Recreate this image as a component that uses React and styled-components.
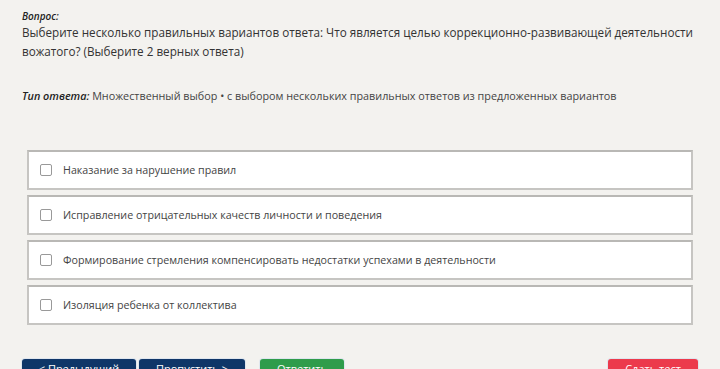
import React from "react";
import styled, { createGlobalStyle } from "styled-components";

const Global = createGlobalStyle`
  html, body { margin: 0; padding: 0; background: #f3f2ef; }
  body { font-family: "Open Sans", "Noto Sans", sans-serif; color: #333; }
`;

const Page = styled.div`
  padding: 9px 22px 0 22px;
  width: 720px;
  box-sizing: border-box;
`;

const Label = styled.div`
  font-size: 10px;
  font-weight: 600;
  font-style: italic;
  line-height: 14px;
  color: #222;
`;

const Question = styled.div`
  font-size: 11.7px;
  line-height: 19px;
  color: #333;
`;

const TypeLine = styled.div`
  margin-top: 27px;
  font-size: 10.8px;
  line-height: 16px;
  color: #444;
  b { font-weight: 600; font-style: italic; color: #222; }
`;

const Options = styled.div`
  margin: 46px 5px 0 5px;
  display: flex;
  flex-direction: column;
  gap: 5px;
`;

const Option = styled.label`
  display: flex;
  align-items: center;
  height: 40px;
  box-sizing: border-box;
  background: #fff;
  border: 2px solid #c6c5c2;
  border-top-color: #b9b8b5;
  padding-left: 11px;
  font-size: 10.7px;
  color: #444;
`;

const Box = styled.span`
  width: 10px;
  height: 10px;
  border: 1px solid #999;
  border-radius: 2px;
  margin-right: 11px;
  background: #fff;
  flex: none;
`;

const Buttons = styled.div`
  margin-top: 34px;
  display: flex;
  gap: 3px;
`;

const Button = styled.button`
  flex: none;
  white-space: nowrap;
  height: 28px;
  width: ${p => p.$w}px;
  padding: 2px 0 0;
  display: flex;
  align-items: flex-start;
  justify-content: center;
  line-height: 16px;
  border: none;
  border-radius: 3px;
  background: ${p => p.$bg};
  color: #fff;
  font-family: "Open Sans", sans-serif;
  font-size: 11px;
  box-shadow: 0 0 0 1px #dfe6ee;
  margin-left: ${p => (p.$auto ? "auto" : `${p.$ml || 0}px`)};
`;

export default function App() {
  const options = [
    "Наказание за нарушение правил",
    "Исправление отрицательных качеств личности и поведения",
    "Формирование стремления компенсировать недостатки успехами в деятельности",
    "Изоляция ребенка от коллектива",
  ];
  return (
    <Page>
      <Global />
      <Label>Вопрос:</Label>
      <Question>
        Выберите несколько правильных вариантов ответа: Что является целью коррекционно-развивающей деятельности вожатого? (Выберите 2 верных ответа)
      </Question>
      <TypeLine>
        <b>Тип ответа:</b> Множественный выбор • с выбором нескольких правильных ответов из предложенных вариантов
      </TypeLine>
      <Options>
        {options.map(o => (
          <Option key={o}><Box />{o}</Option>
        ))}
      </Options>
      <Buttons>
        <Button $bg="#0f3668" $w={114}>&lt; Предыдущий</Button>
        <Button $bg="#0f3668" $w={106}>Пропустить &gt;</Button>
        <Button $bg="#2f9c4b" $w={84} $ml={12}>Ответить</Button>
        <Button $bg="#ec3a4c" $w={90} $auto>Сдать тест</Button>
      </Buttons>
    </Page>
  );
}
